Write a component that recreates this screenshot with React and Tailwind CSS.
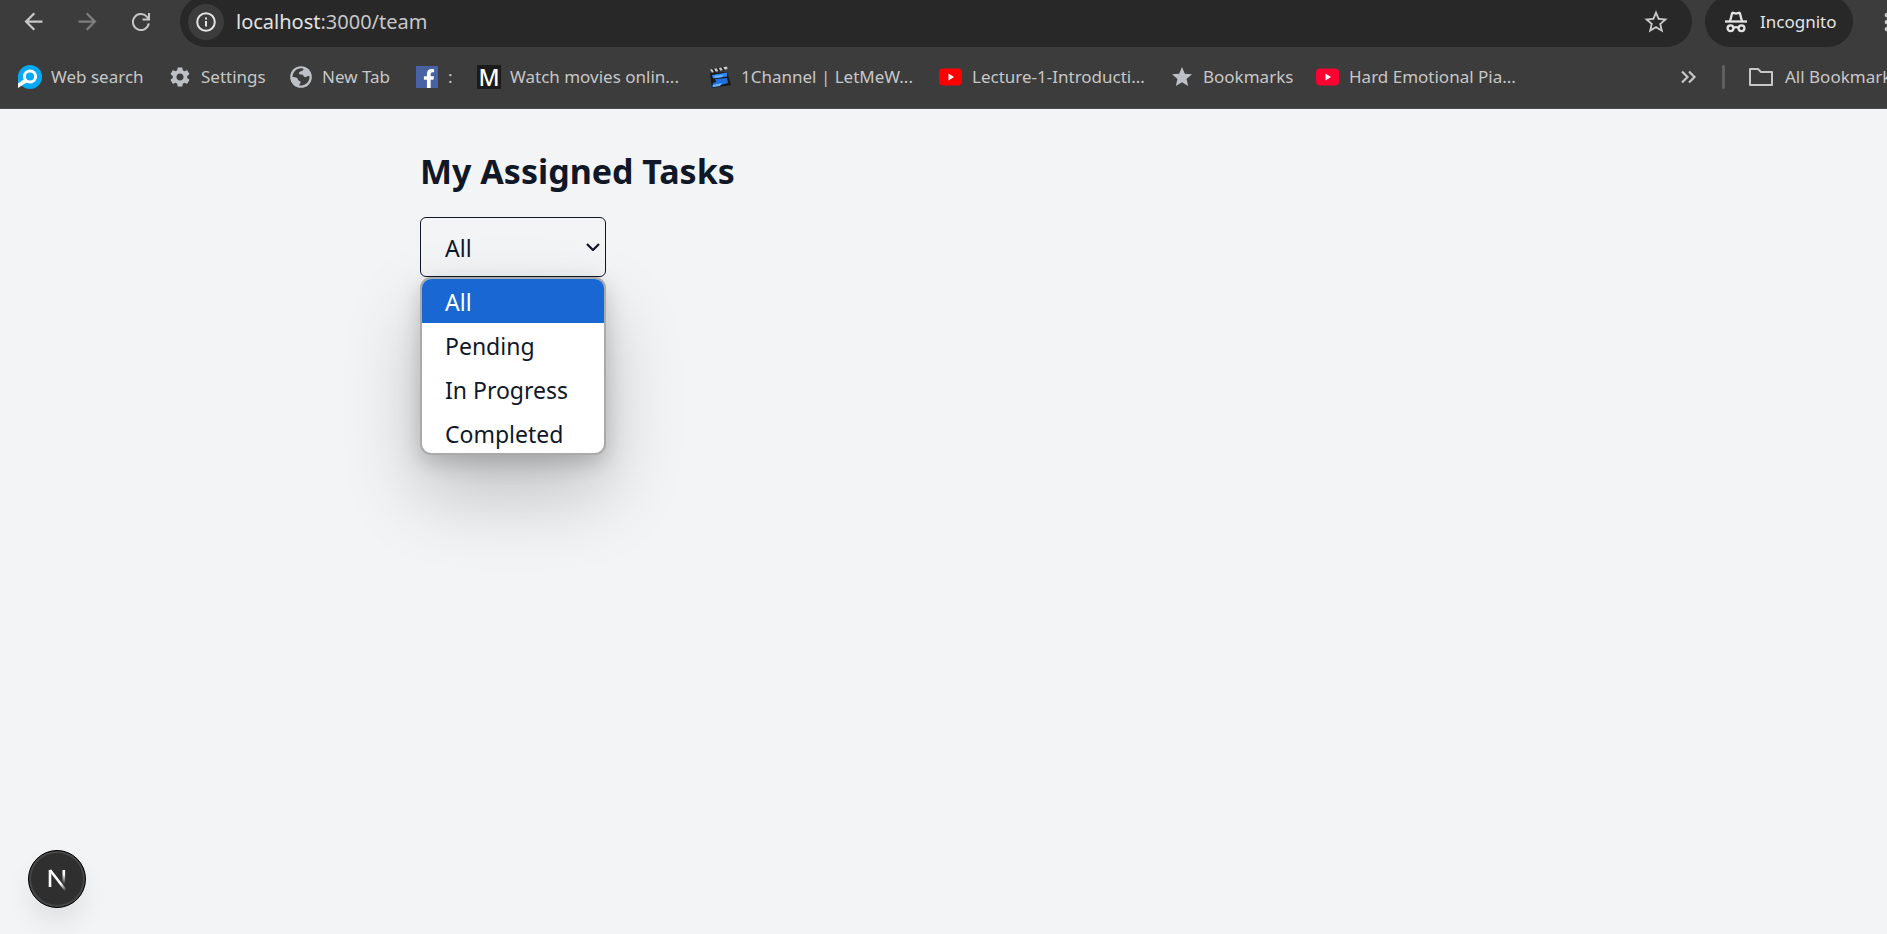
import { useState } from "react";
import { MdArrowBack, MdArrowForward, MdSettings, MdStar, MdStarBorder, MdMoreVert } from "react-icons/md";
import { FaFacebookF } from "react-icons/fa";

const iconButton = "flex size-[54px] shrink-0 items-center justify-center";

function ReloadIcon() {
  return (
    <svg viewBox="0 0 18 18" className="size-[18px]" fill="none" stroke="#c7c7c7" strokeWidth="2">
      <path d="M16.8 10.4A8 8 0 1 1 14.8 3.6L17 6.200" />
      <path d="M17 0V6.500H10.500" />
    </svg>
  );
}

function InfoIcon() {
  return (
    <svg viewBox="0 0 20 20" className="size-5" fill="none" stroke="#e3e3e3" strokeWidth="2">
      <circle cx="10" cy="10" r="8.8" />
      <path d="M10 9v5.5M10 5.4v2" />
    </svg>
  );
}

function IncognitoIcon() {
  return (
    <svg viewBox="0 0 22 22" className="size-[22px]" fill="none" stroke="#e3e3e3" strokeWidth="2.300">
      <path d="M0 10.500h22" />
      <path d="M5 10.500 7 2.600q.3-1 1.200-.8l2.800.7 2.800-.7q.9-.2 1.200.8l2 7.900" />
      <circle cx="5.500" cy="17.200" r="2.900" />
      <circle cx="16.500" cy="17.200" r="2.900" />
      <path d="M8.500 16.800q2.500-1.200 5 0" />
    </svg>
  );
}

function SearchSiteIcon() {
  return (
    <svg viewBox="0 0 24 24" className="size-6">
      <circle cx="12" cy="12" r="12" fill="#06a9f4" />
      <path fill="#06a9f4" d="M0 9v13l8-8Z" />
      <circle cx="12" cy="11.500" r="5.600" fill="none" stroke="#fff" strokeWidth="3" />
      <path fill="#fff" d="M0 18.500 5.500 14.500l4 2.500L0 23Z" />
    </svg>
  );
}

function GlobeIcon() {
  return (
    <svg viewBox="0 0 22 22" className="size-[22px]">
      <circle cx="11" cy="11" r="10.800" fill="#bdc1c6" />
      <path fill="#3c3c3c" d="M13.500 2.700c.2 1.600-.8 2.200-2.300 2.500-1.700.4-2.500 1-2.200 2.300.3 1.200 1.700 1 3 1.100 1.700.1 1.400 2.200 2.700 2.500 1.700.3 2.200-1.200 3.800-1l1.100.4A8.700 8.700 0 0 1 9 19.300c.2-1.200 1.600-1.500 1.600-2.900 0-1.600-1.500-1.300-2.300-2.200-.7-.9-.3-1.900-1.500-2.500-1.300-.6-2.900-.3-4.300-.7A8.600 8.600 0 0 1 13.500 2.700Z" />
    </svg>
  );
}

function ClapperIcon() {
  return (
    <svg viewBox="0 0 24 24" className="size-6">
      <path fill="#181818" d="M2 8 19 7l4 13-19 3Z" />
      <path fill="#c9c9c9" d="m2 4.500 17-3 .5 2.500L4 7.500Z" />
      <path stroke="#222" strokeWidth="1.800" d="m5 3.500 2 4M9.500 2.500l2 4M14 2l2 3.500" />
      <path fill="#2f86f5" d="m4 10 15-2.500v4L5 13.500Z" />
      <path fill="#1f6fe0" d="m7 14 12-1 1 5-16 4.500 1-4.500 3-1Z" />
      <path fill="#6fb4ff" d="m6 11 9-1-1 2-7 1ZM5 20l9-2-2 3-7 1Z" />
    </svg>
  );
}

function YoutubeIcon({ className }) {
  return (
    <svg viewBox="0 0 24 24" className="size-6">
      <rect x="0" y="3.500" width="23" height="17" rx="4" fill="currentColor" className={className} />
      <path fill="#fff" d="m9.500 8.500 5.500 3.500-5.500 3.500Z" />
    </svg>
  );
}

const bookmarks = [
  { label: "Web search", icon: <SearchSiteIcon />, width: "w-[150px]" },
  { label: "Settings", icon: <MdSettings className="size-6 text-[#bdc1c6]" />, width: "w-[121px]" },
  { label: "New Tab", icon: <GlobeIcon />, width: "w-[126px]" },
  {
    label: ":",
    icon: (
      <span className="flex size-[22px] items-end justify-center bg-[#4862a3]">
        <FaFacebookF className="ml-1 size-[19px] text-white" />
      </span>
    ),
    width: "w-[62px]",
  },
  {
    label: "Watch movies onlin...",
    icon: (
      <span className="flex size-6 items-center justify-center bg-[#1b1b1b] text-[23px] font-medium leading-6 text-white">
        M
      </span>
    ),
    width: "w-[231px]",
  },
  { label: "1Channel | LetMeW...", icon: <ClapperIcon />, width: "w-[231px]" },
  { label: "Lecture-1-Introducti...", icon: <YoutubeIcon className="text-[#f00]" />, width: "w-[231px]" },
  { label: "Bookmarks", icon: <MdStar className="size-6 text-[#bdc1c6]" />, width: "w-[146px]" },
  { label: "Hard Emotional Pia...", icon: <YoutubeIcon className="text-[#ff0033]" />, width: "w-[231px]" },
];

function Browser() {
  return (
    <header className="overflow-hidden border-b border-[#4a4a4a] bg-[#3c3c3c] text-[#c7c7c7]">
      <div className="-mt-1 flex h-[51px] items-center pl-[6px]">
        <button aria-label="Back" className={iconButton}>
          <MdArrowBack className="size-[27px]" />
        </button>
        <button aria-label="Forward" className={iconButton}>
          <MdArrowForward className="size-[27px] text-[#7d7d7d]" />
        </button>
        <button aria-label="Reload" className={iconButton}>
          <ReloadIcon />
        </button>
        <div className="ml-3 flex h-full min-w-0 flex-1 items-center rounded-full bg-[#282828] pl-2 pr-[22px]">
          <button aria-label="Site information" className="flex size-9 shrink-0 items-center justify-center rounded-full bg-[#3c3c3c]">
            <InfoIcon />
          </button>
          <a href="/team" className="ml-3 flex-1 text-[20px] text-[#c7c7c7]">
            <span className="text-[#e3e3e3]">localhost</span>:3000/team
          </a>
          <button aria-label="Bookmark this tab">
            <MdStarBorder className="size-7" />
          </button>
        </div>
        <button className="ml-[13px] flex h-full w-[148px] shrink-0 items-center gap-[13px] rounded-full bg-[#282828] pl-5 text-[17px] text-[#e3e3e3]">
          <IncognitoIcon />
          Incognito
        </button>
        <button aria-label="Menu" className="flex w-[34px] shrink-0 overflow-hidden pl-5">
          <MdMoreVert className="size-7 shrink-0" />
        </button>
      </div>
      <nav aria-label="Bookmarks" className="flex h-[61px] items-center whitespace-nowrap pb-px pl-[18px] text-[17px]">
        <div className="flex min-w-0 flex-1 overflow-hidden">
          {bookmarks.map((b) => (
            <a key={b.label} href="#" className={"flex shrink-0 items-center gap-[9px] " + b.width}>
              <span className="flex w-6 shrink-0 justify-center">{b.icon}</span>
              {b.label}
            </a>
          ))}
        </div>
        <div className="flex w-[210px] shrink-0 items-center overflow-hidden">
          <button aria-label="More bookmarks" className="shrink-0">
            <svg viewBox="0 0 24 24" className="size-6" fill="none" stroke="currentColor" strokeWidth="2.200">
              <path d="m5 6.500 5.500 5.500L5 17.500M12 6.500l5.500 5.500-5.500 5.500" />
            </svg>
          </button>
          <span className="ml-[21px] h-6 w-[3px] shrink-0 rounded bg-[#5f5f5f]" />
          <a href="#" className="ml-6 flex shrink-0 items-center gap-3">
            <svg viewBox="0 0 24 24" className="size-6" fill="none" stroke="currentColor" strokeWidth="2" strokeLinejoin="round">
              <path d="M1 4h8l3 3h11v13H1Z" />
            </svg>
            All Bookmarks
          </a>
        </div>
      </nav>
    </header>
  );
}

const options = ["All", "Pending", "In Progress", "Completed"];

function StatusFilter() {
  const [value, setValue] = useState("All");
  return (
    <div className="relative w-[186px] text-[23px]">
      <select
        aria-label="Filter by status"
        value={value}
        onChange={(e) => setValue(e.target.value)}
        className="h-[60px] w-full appearance-none rounded-md border border-gray-900 bg-transparent pl-6 pt-[2px]"
      >
        {options.map((o) => (
          <option key={o}>{o}</option>
        ))}
      </select>
      <svg viewBox="0 0 14 8" className="pointer-events-none absolute right-[6px] top-[26px] h-2 w-[14px]" fill="none" stroke="#111827" strokeWidth="2.200">
        <path d="m1 1 6 6 6-6" />
      </svg>
      <ul
        role="listbox"
        aria-label="Status"
        className="absolute left-0 top-full h-[178px] w-full overflow-hidden rounded-[11px] border-2 border-[#aaaaaa] bg-white shadow-[0_38px_77px_rgba(0,0,0,0.22),0_8px_22px_rgba(0,0,0,0.18)]"
      >
        {options.map((o) => (
          <li
            key={o}
            role="option"
            aria-selected={o === value}
            onClick={() => setValue(o)}
            className={"flex h-11 items-center pl-[23px] pt-[2px] " + (o === value ? "bg-[#1967d2] text-white" : "")}
          >
            {o}
          </li>
        ))}
      </ul>
    </div>
  );
}

export default function App() {
  return (
    <div className="flex min-h-screen flex-col bg-gray-100 font-['Noto_Sans','Open_Sans',sans-serif] text-gray-900">
      <Browser />
      <main className="mx-auto w-full max-w-[1047px] pt-9">
        <h1 className="mb-5 text-[34px] font-bold leading-[52px]">My Assigned Tasks</h1>
        <StatusFilter />
      </main>
      <button
        aria-label="Open Next.js Dev Tools"
        className="fixed bottom-[26px] left-7 flex size-[58px] items-center justify-center rounded-full border border-black bg-[#2f2f2f] shadow-[inset_0_0_0_2px_#474747,0_16px_32px_-8px_rgba(0,0,0,0.14)]"
      >
        <svg viewBox="0 0 20 24" className="h-6 w-5" fill="none" strokeWidth="2.600">
          <defs>
            <linearGradient id="stem" x1="0" y1="0" x2="0" y2="1">
              <stop offset="0.3" stopColor="#fff" />
              <stop offset="1" stopColor="#fff" stopOpacity="0" />
            </linearGradient>
            <linearGradient id="diagonal" x1="0" y1="0" x2="1" y2="1">
              <stop offset="0.700" stopColor="#fff" />
              <stop offset="1" stopColor="#fff" stopOpacity="0.100" />
            </linearGradient>
          </defs>
          <path stroke="#fff" d="M3 20V3" />
          <path stroke="url(#diagonal)" d="M3 3 18.500 23" />
          <rect x="15.500" y="3" width="2.600" height="14" fill="url(#stem)" />
        </svg>
      </button>
    </div>
  );
}
